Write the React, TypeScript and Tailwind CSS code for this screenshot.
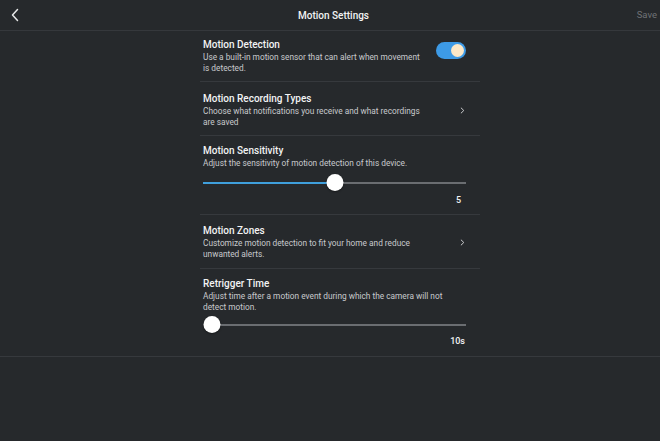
import * as React from "react";

const font = { fontFamily: "Roboto, 'Noto Sans', sans-serif" };

const Chevron = () => (
  <svg width="5" height="7" viewBox="0 0 5 7" aria-hidden="true" className="mr-[1px]">
    <path d="M1.2 1 L3.8 3.5 L1.2 6" fill="none" stroke="#c9cbcd" strokeWidth="1" strokeLinecap="round" strokeLinejoin="round" />
  </svg>
);

const Slider = ({ percent }: { percent: number }) => (
  <div className="relative h-[18px] w-[263px]">
    <div className="absolute left-0 right-0 top-[8px] h-[2px] bg-[#6a6d71]" />
    <div className="absolute left-0 top-[8px] h-[2px] bg-[#3f9fdc]" style={{ width: `${percent}%` }} />
    <div
      className="absolute top-0 h-[17px] w-[17px] -translate-x-1/2 rounded-full bg-white shadow-[0_1px_2px_rgba(0,0,0,0.4)]"
      style={{ left: `${percent}%` }}
    />
  </div>
);

const Row = ({
  title,
  desc,
  right,
  className,
  children,
}: {
  title: string;
  desc: React.ReactNode;
  right?: React.ReactNode;
  className?: string;
  children?: React.ReactNode;
}) => (
  <div className={"flex flex-col border-b border-[#36393d] pl-[3px] pr-[14px] " + (className ?? "")}>
    <div className="flex items-center justify-between">
      <div className="flex flex-col">
        <p className="text-[10px] font-medium leading-[12px] text-[#f2f3f4]">{title}</p>
        <p className={"mt-[1px] text-[8.3px] leading-[11px] text-[#c8cacc] " + (right ? "w-[217px]" : "w-[244px]")}>
          {desc}
        </p>
      </div>
      {right}
    </div>
    {children}
  </div>
);

export default function App() {
  return (
    <div className="h-[441px] w-[660px] overflow-hidden bg-[#26292c]" style={font}>
      {/* Header */}
      <div className="flex h-[31px] items-center border-b border-[#35383c] pl-[10px] pr-[3px]">
        <div className="w-[40px]">
          <svg width="10" height="14" viewBox="0 0 10 14" aria-hidden="true">
            <path d="M7.5 1.5 L2.5 7 L7.5 12.5" fill="none" stroke="#e6e7e8" strokeWidth="1.5" strokeLinecap="round" strokeLinejoin="round" />
          </svg>
        </div>
        <p className="flex-1 text-center text-[10px] font-medium text-[#f2f3f4]">Motion Settings</p>
        <p className="w-[40px] text-right text-[9.5px] text-[#6f7276]">Save</p>
      </div>

      <div className="ml-[200px] w-[280px]">
        <Row
          className="h-[51px] pt-[8px]"
          title="Motion Detection"
          desc="Use a built-in motion sensor that can alert when movement is detected."
          right={
            <div className="mb-[12px] flex h-[17px] w-[30px] items-center justify-end rounded-full bg-[#3d9ae6] pr-[2px]">
              <div className="h-[13px] w-[13px] rounded-full bg-[#fce8c8]" />
            </div>
          }
        />
        <Row
          className="h-[54px] pt-[11px]"
          title="Motion Recording Types"
          desc="Choose what notifications you receive and what recordings are saved"
          right={<Chevron />}
        />
        <Row
          className="h-[79px] pt-[9px]"
          title="Motion Sensitivity"
          desc="Adjust the sensitivity of motion detection of this device."
        >
          <div className="mt-[5px]">
            <Slider percent={50} />
          </div>
          <p className="mt-[3px] pr-[5px] text-right text-[9px] font-medium leading-[11px] text-[#f2f3f4]">5</p>
        </Row>
        <Row
          className="h-[54px] pt-[10px]"
          title="Motion Zones"
          desc="Customize motion detection to fit your home and reduce unwanted alerts."
          right={<Chevron />}
        />
        <Row
          className="h-[88px] pt-[9px]"
          title="Retrigger Time"
          desc="Adjust time after a motion event during which the camera will not detect motion."
        >
          <div className="mt-[3px] pl-[9px]">
            <div className="relative h-[18px] w-[254px]">
              <div className="absolute left-0 right-0 top-[8px] h-[2px] bg-[#6a6d71]" />
              <div className="absolute left-0 top-0 h-[17px] w-[17px] -translate-x-1/2 rounded-full bg-white shadow-[0_1px_2px_rgba(0,0,0,0.4)]" />
            </div>
          </div>
          <p className="mt-[2px] pr-[1px] text-right text-[9px] font-medium leading-[11px] text-[#f2f3f4]">10s</p>
        </Row>
      </div>
      <div className="-mt-px h-px w-full bg-[#36393d]" />
    </div>
  );
}
